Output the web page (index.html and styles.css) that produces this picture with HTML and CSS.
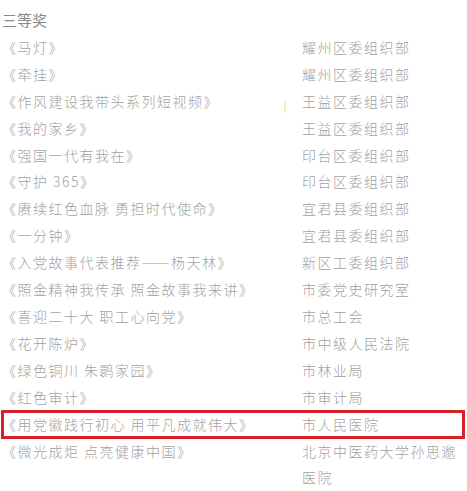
FILE: index.html
```html
<!DOCTYPE html>
<html lang="zh-CN">
<head>
<meta charset="utf-8">
<title>三等奖</title>
<link rel="stylesheet" href="styles.css">
</head>
<body>
<div class="page">
  <div class="title">三等奖</div>
  <div class="row"><div class="work">《马灯》</div><div class="org">耀州区委组织部</div></div>
  <div class="row"><div class="work">《牵挂》</div><div class="org">耀州区委组织部</div></div>
  <div class="row mark"><div class="work">《作风建设我带头系列短视频》</div><div class="org">王益区委组织部</div></div>
  <div class="row"><div class="work">《我的家乡》</div><div class="org">王益区委组织部</div></div>
  <div class="row"><div class="work">《强国一代有我在》</div><div class="org">印台区委组织部</div></div>
  <div class="row"><div class="work">《守护 365》</div><div class="org">印台区委组织部</div></div>
  <div class="row"><div class="work">《赓续红色血脉 勇担时代使命》</div><div class="org">宜君县委组织部</div></div>
  <div class="row"><div class="work">《一分钟》</div><div class="org">宜君县委组织部</div></div>
  <div class="row"><div class="work">《入党故事代表推荐——杨天林》</div><div class="org">新区工委组织部</div></div>
  <div class="row"><div class="work">《照金精神我传承 照金故事我来讲》</div><div class="org">市委党史研究室</div></div>
  <div class="row"><div class="work">《喜迎二十大 职工心向党》</div><div class="org">市总工会</div></div>
  <div class="row"><div class="work">《花开陈炉》</div><div class="org">市中级人民法院</div></div>
  <div class="row"><div class="work">《绿色铜川 朱鹮家园》</div><div class="org">市林业局</div></div>
  <div class="row"><div class="work">《红色审计》</div><div class="org">市审计局</div></div>
  <div class="row highlight"><div class="work">《用党徽践行初心 用平凡成就伟大》</div><div class="org">市人民医院</div></div>
  <div class="row"><div class="work">《微光成炬 点亮健康中国》</div><div class="org">北京中医药大学孙思邈医院</div></div>
</div>
</body>
</html>
```
FILE: styles.css
```css
html, body {
  margin: 0;
  padding: 0;
  background: #ffffff;
}

.page {
  width: 467px;
  padding: 7px 0 0 2px;
  box-sizing: border-box;
  font-family: "Noto Sans CJK SC", "Noto Sans", sans-serif;
  font-weight: 300;
  color: #a2a2a2;
}

.title {
  font-size: 15px;
  line-height: 26.9px;
  color: #8a8a8a;
  font-weight: 400;
}

.row {
  display: flex;
  font-size: 14px;
  line-height: 26.9px;
  letter-spacing: 1.5px;
  position: relative;
}

.work {
  width: 300px;
  flex: none;
  white-space: nowrap;
}

.org {
  width: 162px;
  flex: none;
}

.highlight::after {
  content: "";
  position: absolute;
  left: -1px;
  top: -1px;
  width: 464px;
  height: 29px;
  border: 3px solid #d9212b;
  box-sizing: border-box;
}

.mark::after {
  content: "";
  position: absolute;
  left: 282px;
  top: 13px;
  width: 2px;
  height: 12px;
  background: #eef2b8;
}
```
